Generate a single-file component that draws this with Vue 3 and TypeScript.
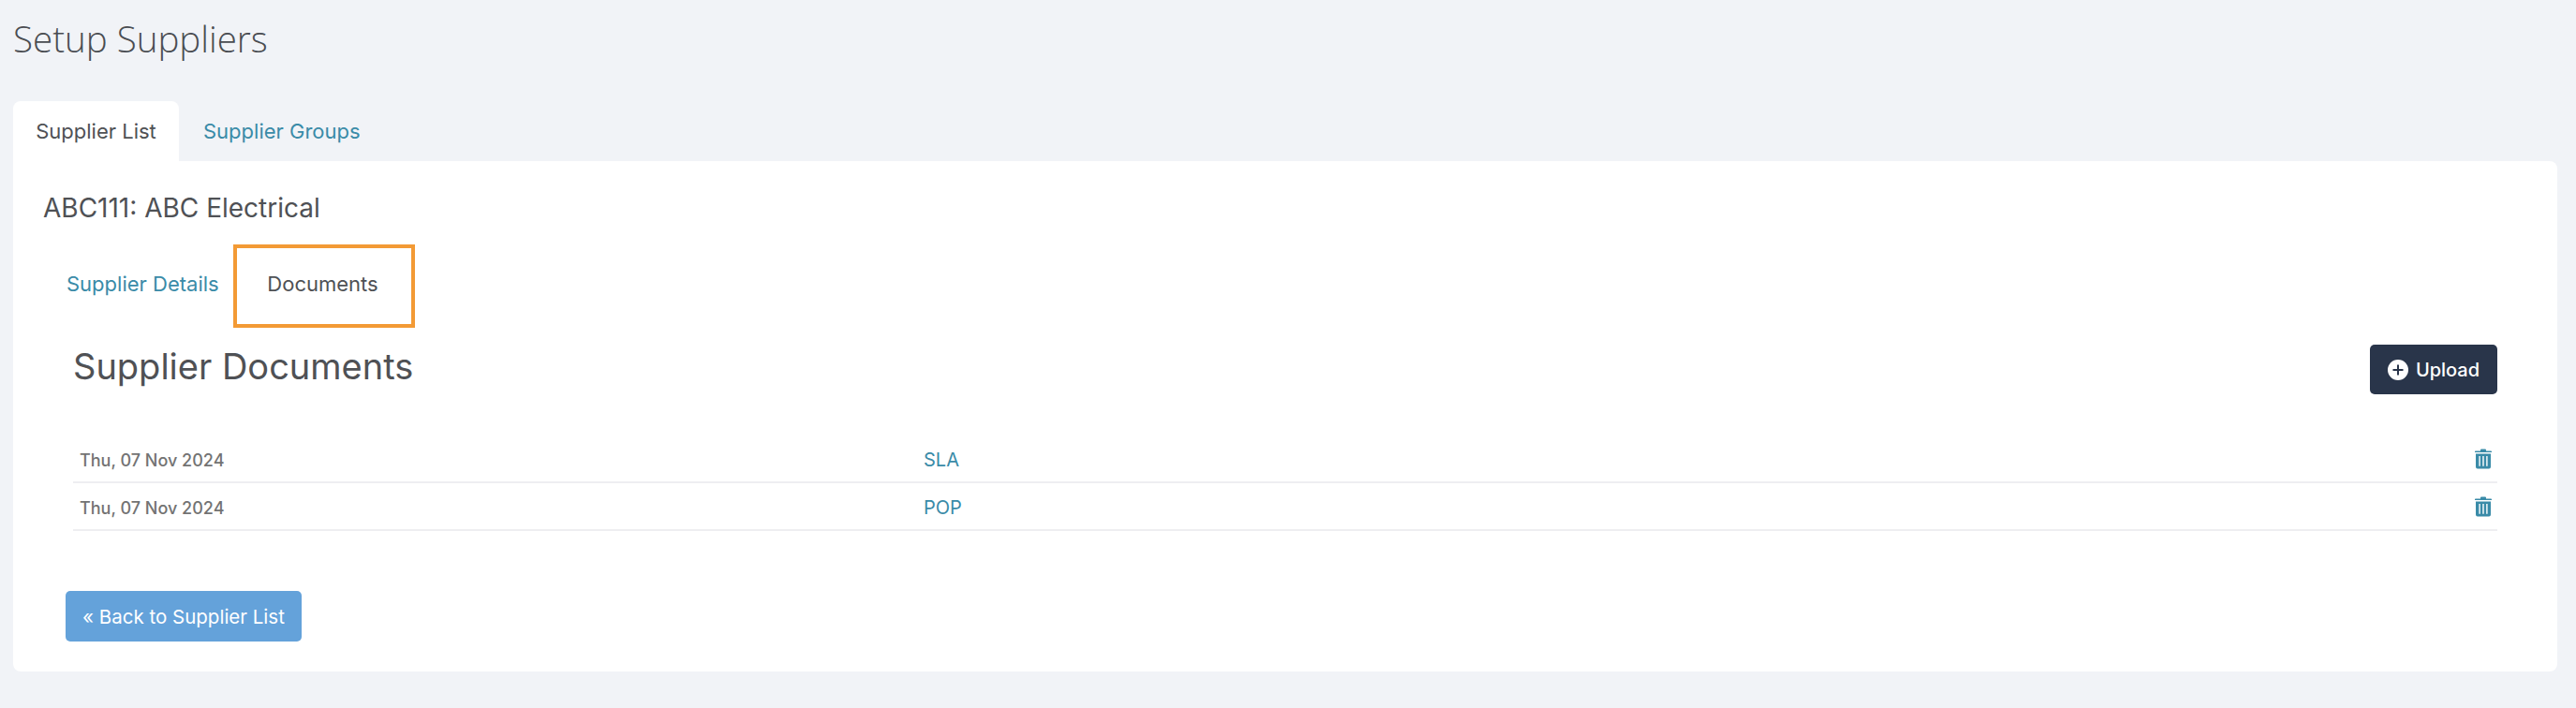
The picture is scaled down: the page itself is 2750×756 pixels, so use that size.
<template>
  <div class="page">
    <h1 class="page-title">Setup Suppliers</h1>

    <div class="main-tabs">
      <div class="main-tab active">Supplier List</div>
      <a class="main-tab link">Supplier Groups</a>
    </div>

    <div class="panel">
      <h2 class="supplier-name">ABC111: ABC Electrical</h2>

      <div class="sub-tabs">
        <a class="sub-tab link">Supplier Details</a>
        <div class="sub-tab active">Documents</div>
      </div>

      <div class="docs">
        <div class="docs-head">
          <h3 class="docs-title">Supplier Documents</h3>
          <button class="upload-btn">
            <svg class="plus-icon" viewBox="0 0 22 22" width="22" height="22">
              <circle cx="11" cy="11" r="11" fill="#fff" />
              <path d="M11 5.5v11M5.5 11h11" stroke="#29354a" stroke-width="2" />
            </svg>
            Upload
          </button>
        </div>

        <div class="doc-list">
          <div v-for="doc in docs" :key="doc.name" class="doc-row">
            <span class="doc-date">{{ doc.date }}</span>
            <a class="doc-name link">{{ doc.name }}</a>
            <svg class="trash-icon" viewBox="0 0 18 22" width="18" height="22">
              <path
                fill="#3a8ba8"
                fill-rule="evenodd"
                d="M6 1.6Q6 .6 7 .6h4q1 0 1 1V2.400h5.200q.8 0 .8.8v.8H0v-.8q0-.8.8-.8H6zM1 5.600h16V19.400q0 2-2 2H3q-2 0-2-2zM4.400 8v10.800h1.400V8zM8.300 8v10.800h1.400V8zM12.200 8v10.800h1.400V8z"
              />
            </svg>
          </div>
        </div>
      </div>

      <button class="back-btn">« Back to Supplier List</button>
    </div>
  </div>
</template>

<script setup lang="ts">
interface SupplierDoc {
  date: string
  name: string
}

const docs: SupplierDoc[] = [
  { date: 'Thu, 07 Nov 2024', name: 'SLA' },
  { date: 'Thu, 07 Nov 2024', name: 'POP' }
]
</script>

<style>
html,
body {
  margin: 0;
  background: #f1f3f7;
}
</style>

<style scoped>
.page {
  height: 756px;
  box-sizing: border-box;
  padding: 18px 20px 0 14px;
  background: #f1f3f7;
  font-family: Inter, Roboto, sans-serif;
  color: #4f5155;
}

.page-title {
  margin: 0 0 44px 0;
  height: 46px;
  line-height: 46px;
  font-family: 'Open Sans', sans-serif;
  font-size: 38.500px;
  font-weight: 300;
  color: #4a4d52;
}

.link {
  color: #3a8ba8;
}

.main-tabs {
  display: flex;
  height: 64px;
}

.main-tab {
  display: flex;
  align-items: center;
  font-size: 22px;
  padding: 0 24px;
}

.main-tab.active {
  width: 177px;
  box-sizing: border-box;
  justify-content: center;
  padding: 0;
  background: #fff;
  border-radius: 8px 8px 0 0;
}

.main-tab.link {
  padding-left: 26px;
}

.panel {
  height: 545px;
  box-sizing: border-box;
  padding: 32px 64px 0 32px;
  background: #fff;
  border-radius: 0 8px 8px 8px;
}

.supplier-name {
  margin: 0;
  height: 36px;
  line-height: 36px;
  font-size: 28px;
  font-weight: 400;
}

.sub-tabs {
  display: flex;
  margin-top: 21px;
  height: 89px;
}

.sub-tab {
  display: flex;
  align-items: center;
  font-size: 22px;
  padding-bottom: 5px;
}

.sub-tab.link {
  margin-left: 25px;
  width: 178px;
}

.sub-tab.active {
  width: 194px;
  box-sizing: border-box;
  justify-content: center;
  padding-right: 3px;
  border: 4px solid #f39a35;
}

.docs {
  margin-left: 32px;
}

.docs-head {
  display: flex;
  justify-content: space-between;
  align-items: flex-start;
  height: 97px;
  margin-top: 18px;
}

.docs-title {
  margin: 0;
  font-size: 38px;
  line-height: 46px;
  font-weight: 400;
  color: #4f5155;
}

.upload-btn {
  display: flex;
  align-items: center;
  justify-content: center;
  gap: 8px;
  width: 136px;
  height: 53px;
  border: 0;
  border-radius: 5px;
  background: #29354a;
  color: #fff;
  font-family: inherit;
  font-size: 20px;
  font-weight: 500;
}

.doc-row {
  display: flex;
  align-items: center;
  height: 51px;
  box-sizing: border-box;
  padding-top: 3px;
  border-bottom: 2px solid #eeeef1;
}

.doc-date {
  width: 908px;
  padding-left: 7px;
  box-sizing: border-box;
  color: #737373;
  font-size: 18px;
  font-weight: 500;
}

.doc-name {
  flex: 1;
  font-size: 20px;
}

.trash-icon {
  margin-right: 6px;
  margin-top: -2px;
}

.back-btn {
  display: block;
  width: 252px;
  height: 54px;
  margin: 64px 0 0 24px;
  border: 0;
  border-radius: 5px;
  background: #64a2da;
  color: #fff;
  font-family: inherit;
  font-size: 20.500px;
  padding: 0;
}
</style>
